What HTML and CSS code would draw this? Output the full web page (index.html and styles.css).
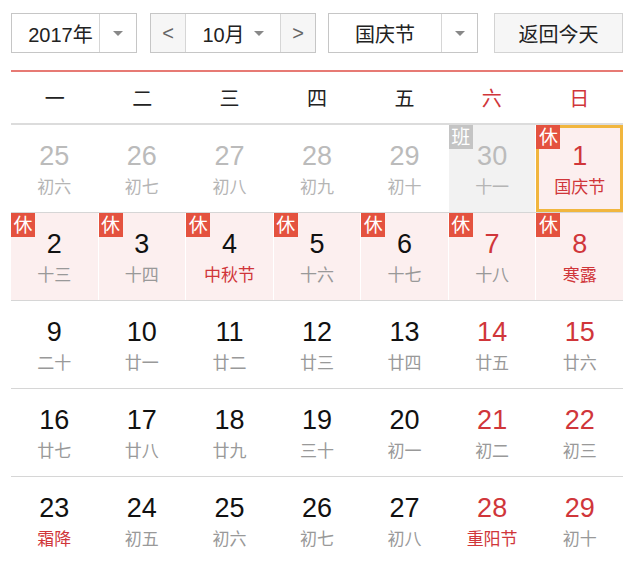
FILE: index.html
```html
<!DOCTYPE html>
<html lang="zh">
<head>
<meta charset="utf-8">
<link rel="stylesheet" href="styles.css">
</head>
<body>
<div class="cal">
  <div class="toolbar">
    <div class="ctl year">
      <span class="val">2017年</span>
      <span class="drop"><i class="tri"></i></span>
    </div>
    <div class="ctl month">
      <span class="step">&lt;</span>
      <span class="val mval">10月 <i class="tri"></i></span>
      <span class="step">&gt;</span>
    </div>
    <div class="ctl hol">
      <span class="val">国庆节</span>
      <span class="drop"><i class="tri"></i></span>
    </div>
    <div class="ctl today-btn">返回今天</div>
  </div>

  <div class="weekhead">
    <span>一</span><span>二</span><span>三</span><span>四</span><span>五</span><span class="red">六</span><span class="red">日</span>
  </div>

  <div class="row">
    <div class="cell off"><b>25</b><em>初六</em></div>
    <div class="cell off"><b>26</b><em>初七</em></div>
    <div class="cell off"><b>27</b><em>初八</em></div>
    <div class="cell off"><b>28</b><em>初九</em></div>
    <div class="cell off"><b>29</b><em>初十</em></div>
    <div class="cell off work"><span class="badge gray">班</span><b>30</b><em>十一</em></div>
    <div class="cell rest today"><span class="badge">休</span><b class="red">1</b><em class="red">国庆节</em></div>
  </div>

  <div class="row">
    <div class="cell rest"><span class="badge">休</span><b>2</b><em>十三</em></div>
    <div class="cell rest"><span class="badge">休</span><b>3</b><em>十四</em></div>
    <div class="cell rest"><span class="badge">休</span><b>4</b><em class="red">中秋节</em></div>
    <div class="cell rest"><span class="badge">休</span><b>5</b><em>十六</em></div>
    <div class="cell rest"><span class="badge">休</span><b>6</b><em>十七</em></div>
    <div class="cell rest"><span class="badge">休</span><b class="red">7</b><em>十八</em></div>
    <div class="cell rest"><span class="badge">休</span><b class="red">8</b><em class="red">寒露</em></div>
  </div>

  <div class="row">
    <div class="cell"><b>9</b><em>二十</em></div>
    <div class="cell"><b>10</b><em>廿一</em></div>
    <div class="cell"><b>11</b><em>廿二</em></div>
    <div class="cell"><b>12</b><em>廿三</em></div>
    <div class="cell"><b>13</b><em>廿四</em></div>
    <div class="cell"><b class="red">14</b><em>廿五</em></div>
    <div class="cell"><b class="red">15</b><em>廿六</em></div>
  </div>

  <div class="row">
    <div class="cell"><b>16</b><em>廿七</em></div>
    <div class="cell"><b>17</b><em>廿八</em></div>
    <div class="cell"><b>18</b><em>廿九</em></div>
    <div class="cell"><b>19</b><em>三十</em></div>
    <div class="cell"><b>20</b><em>初一</em></div>
    <div class="cell"><b class="red">21</b><em>初二</em></div>
    <div class="cell"><b class="red">22</b><em>初三</em></div>
  </div>

  <div class="row last">
    <div class="cell"><b>23</b><em class="red">霜降</em></div>
    <div class="cell"><b>24</b><em>初五</em></div>
    <div class="cell"><b>25</b><em>初六</em></div>
    <div class="cell"><b>26</b><em>初七</em></div>
    <div class="cell"><b>27</b><em>初八</em></div>
    <div class="cell"><b class="red">28</b><em class="red">重阳节</em></div>
    <div class="cell"><b class="red">29</b><em>初十</em></div>
  </div>
</div>
</body>
</html>
```

FILE: styles.css
```css
* { box-sizing: border-box; }
html, body { margin: 0; padding: 0; background: #fff; }
body {
  font-family: "Liberation Sans", "Noto Sans CJK SC", sans-serif;
  color: #222;
}
.cal {
  width: 612px;
  margin-left: 11px;
  padding-top: 13px;
}
.toolbar {
  display: flex;
  height: 40px;
  margin-bottom: 17px;
}
.ctl {
  display: flex;
  height: 40px;
  border: 1px solid #c6c6c6;
  background: #fff;
  font-size: 20px;
  color: #222;
}
.ctl > span {
  display: flex;
  align-items: center;
  justify-content: center;
}
.year { width: 126px; }
.year .val { width: 87px; padding-left: 10px; }
.year .drop { flex: 1; border-left: 1px solid #d6d6d6; }
.month { width: 166px; margin-left: 13px; }
.month .step {
  width: 35px;
  background: #f6f6f6;
  color: #666;
  font-size: 20px;
}
.month .step:first-child { border-right: 1px solid #d6d6d6; }
.month .step:last-child { border-left: 1px solid #d6d6d6; }
.month .mval { flex: 1; gap: 9px; }
.hol { width: 150px; margin-left: 12px; }
.hol .val { width: 112px; }
.hol .drop { flex: 1; border-left: 1px solid #d6d6d6; }
.today-btn {
  width: 129px;
  margin-left: 16px;
  background: #f6f6f6;
  border-color: #d3d3d3;
  align-items: center;
  justify-content: center;
}
.tri {
  display: inline-block;
  width: 0; height: 0;
  border-left: 5px solid transparent;
  border-right: 5px solid transparent;
  border-top: 5px solid #888;
}

.weekhead {
  display: grid;
  grid-template-columns: repeat(7, 1fr);
  border-top: 2px solid #e77a74;
  border-bottom: 2px solid #dcdcdc;
  height: 55px;
  align-items: center;
  text-align: center;
  font-family: "Noto Sans CJK SC", sans-serif;
  font-size: 20px;
  color: #222;
}
.red { color: #d0363a !important; }

.row {
  display: grid;
  grid-template-columns: repeat(7, 1fr);
  column-gap: 1px;
  height: 88px;
  border-bottom: 1px solid #d6d6d6;
}
.row.last { border-bottom: none; }
.cell {
  position: relative;
  display: flex;
  flex-direction: column;
  align-items: center;
  padding-top: 16px;
}
.cell b {
  font-weight: normal;
  font-size: 27px;
  line-height: 30px;
  color: #111;
}
.cell em {
  font-style: normal;
  font-family: "Noto Sans CJK SC", sans-serif;
  font-size: 17px;
  line-height: 30px;
  color: #999;
}
.cell.off b { color: #bbb; }
.cell.off em { color: #b5b5b5; }
.cell.work { background: #f2f2f2; }
.cell.rest { background: #fcefef; }
.cell.today { border: 3px solid #f1b63e; padding-top: 13px; }
.badge {
  position: absolute;
  left: 0; top: 0;
  width: 24px; height: 24px;
  background: #e4523f;
  color: #fff;
  font-family: "Noto Sans CJK SC", sans-serif;
  font-size: 19px;
  line-height: 22px;
  text-align: center;
}
.cell.today .badge { left: -3px; top: -3px; }
.badge.gray { background: #c4c4c4; }
```
